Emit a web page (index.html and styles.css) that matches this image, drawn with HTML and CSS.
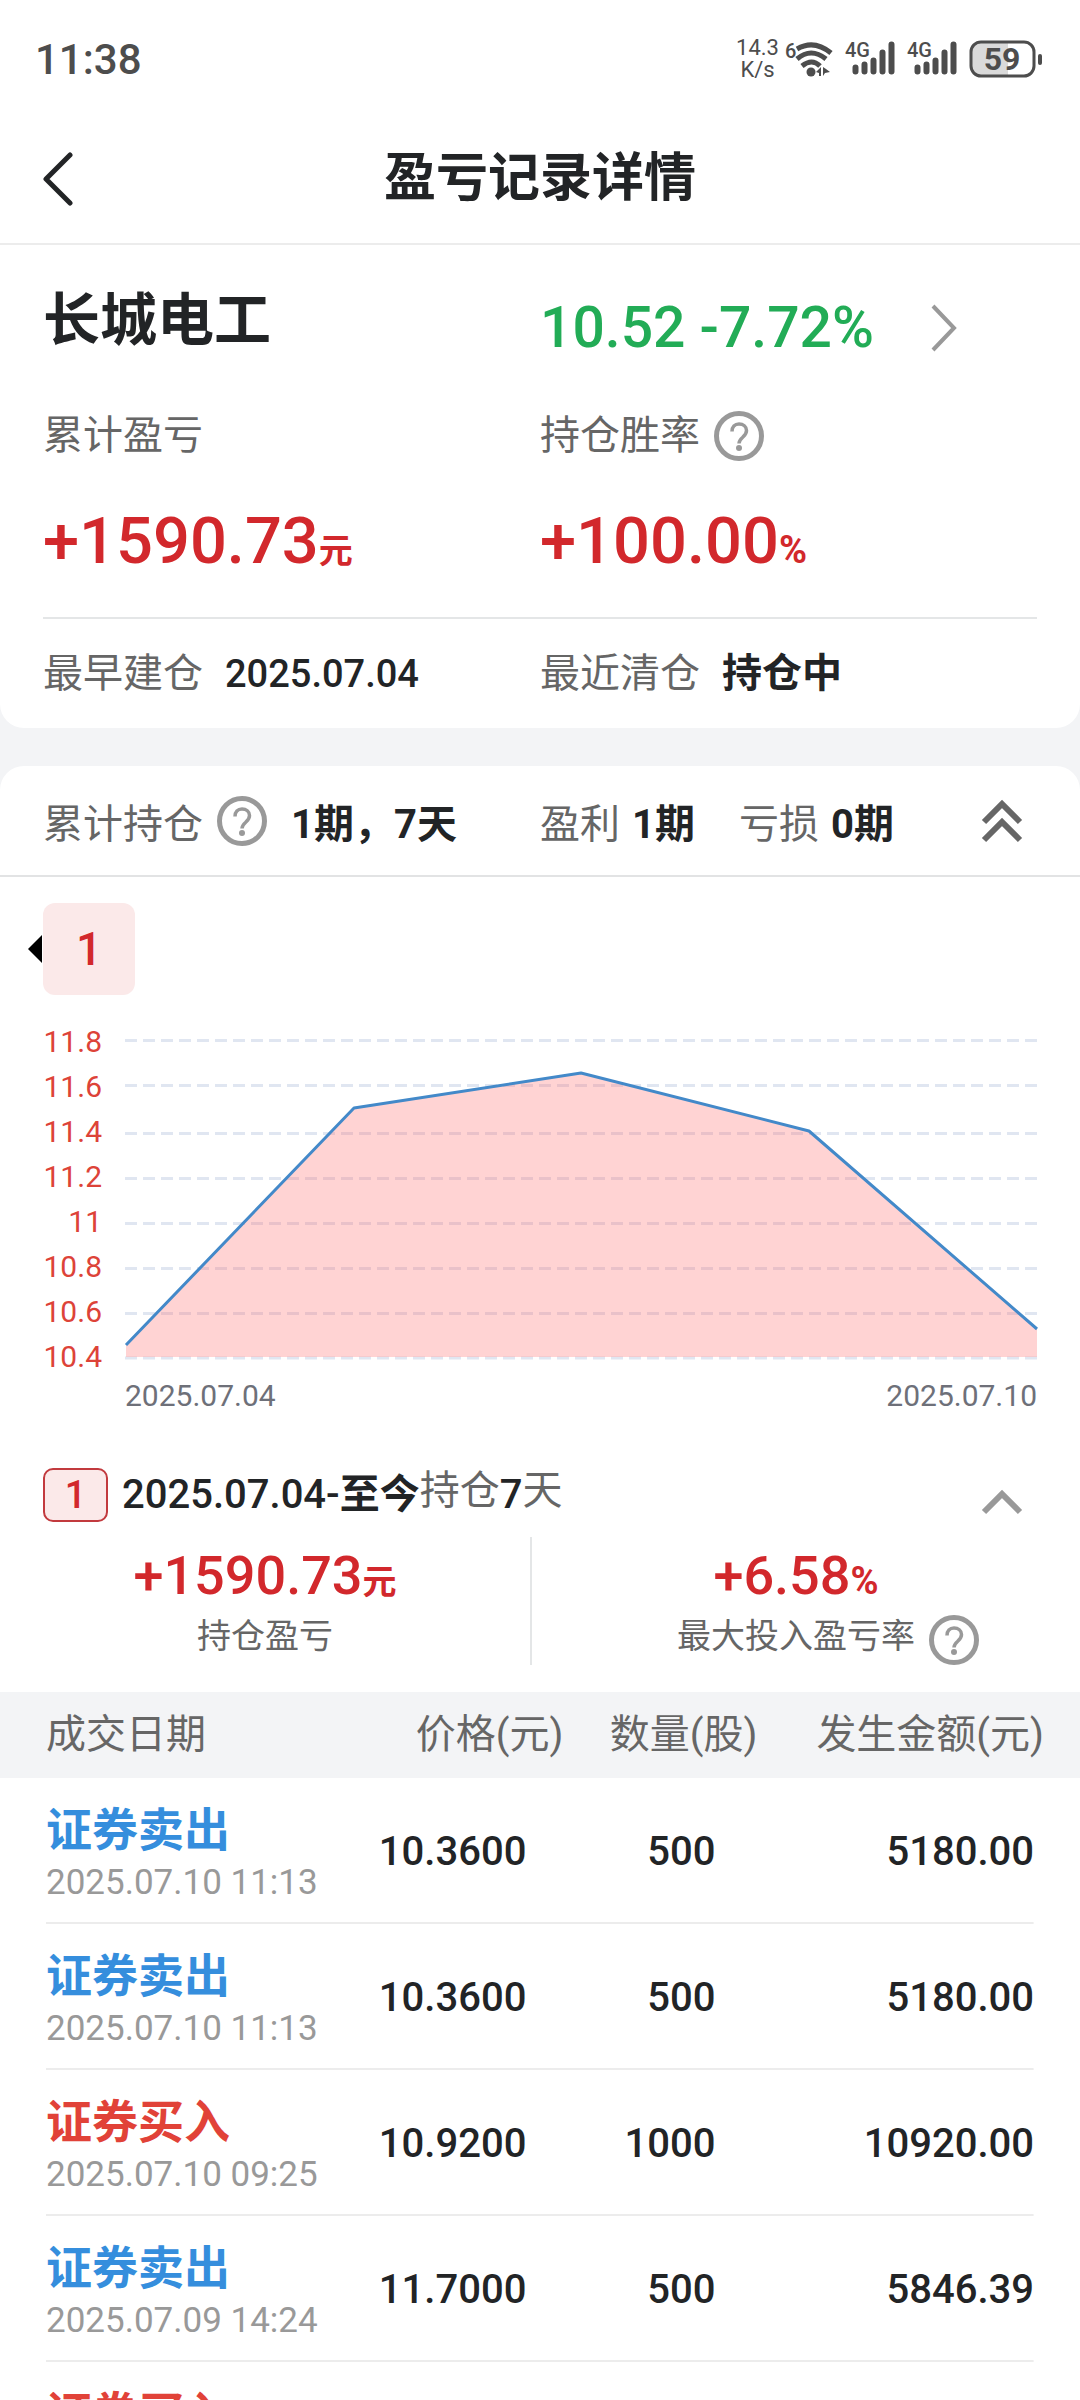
FILE: index.html
```html
<!DOCTYPE html>
<html lang="zh-CN">
<head>
    <meta charset="UTF-8">
    <meta content="width=device-width, initial-scale=1.0" name="viewport">
    <title>盈亏记录详情</title>
    <link rel="stylesheet" href="styles.css">
</head>
<body>
<!-- shared icon shapes -->
<svg class="defs" aria-hidden="true">
    <symbol id="icon-help" viewBox="0 0 50 50">
        <circle cx="25" cy="25" r="22.500" fill="none" stroke="currentColor" stroke-width="5"/>
        <path d="M18 20.500c0-4.500 2.800-7.500 7-7.500s7.500 2.500 7.500 6.500c0 3.500-2 5-4 7-2.500 2.200-3.500 3.500-3.500 6" fill="none" stroke="currentColor" stroke-width="3.500"/>
        <circle cx="25" cy="37" r="3" fill="currentColor"/>
    </symbol>
    <symbol id="icon-signal" viewBox="0 0 54 46">
        <path d="M12.500 31.500v4M21.500 28.500v7M30.500 24.500v11M39.500 16.500v19M48.500 8.500v27" fill="none" stroke="currentColor" stroke-width="6" stroke-linecap="round"/>
    </symbol>
</svg>

<div class="page">
    <div class="status-bar">
        <span class="time">11:38</span>
        <div class="status-icons">
            <div class="speed"><span>14.3</span><span>K/s</span></div>
            <svg class="wifi" width="52" height="46" viewBox="-2 -4 52 46">
                <text x="0" y="18" class="status-text">6</text>
                <g fill="none" stroke="currentColor" stroke-width="5">
                    <path d="M12 9q17-10 34 4"/>
                    <path d="M12 19q14-12 29 0"/>
                    <path d="M17 26q10-8 18 0"/>
                </g>
                <circle cx="26" cy="32" r="4.500" fill="currentColor"/>
                <path d="M31 32l5-5v9h-2v-3zM38 27v9l2-3 5-1-4-3z" fill="currentColor"/>
            </svg>
            <svg width="54" height="46" viewBox="0 0 54 46">
                <use href="#icon-signal"/>
                <text x="2" y="21" class="status-text">4G</text>
            </svg>
            <svg width="54" height="46" viewBox="0 0 54 46">
                <use href="#icon-signal"/>
                <text x="2" y="21" class="status-text">4G</text>
            </svg>
            <svg class="battery" width="74" height="38" viewBox="0 0 74 38">
                <path d="M11 2h28v34H11a9 9 0 0 1-9-9V11a9 9 0 0 1 9-9z" fill="#dadada"/>
                <rect x="2" y="2" width="63" height="34" rx="10" fill="none" stroke="currentColor" stroke-width="3"/>
                <rect x="69" y="14" width="4" height="11" rx="2" fill="currentColor"/>
                <text x="33" y="30" text-anchor="middle" class="battery-text">59</text>
            </svg>
        </div>
    </div>

    <header class="nav">
        <button class="icon-button" aria-label="返回">
            <svg width="30" height="54" viewBox="0 0 30 54"><path d="M27 3L3 27l24 24" fill="none" stroke="currentColor" stroke-width="5" stroke-linecap="round" stroke-linejoin="round"/></svg>
        </button>
        <h1>盈亏记录详情</h1>
    </header>

    <main>
        <section class="card summary">
            <div class="row stock">
                <h2>长城电工</h2>
                <a class="quote" href="#quote">
                    <span>10.52 -7.72%</span>
                    <svg width="28" height="48" viewBox="0 0 28 48"><path d="M3 2l21 22L3 46" fill="none" stroke="#999" stroke-width="4"/></svg>
                </a>
            </div>
            <div class="row labels">
                <span class="label">累计盈亏</span>
                <div class="with-help">
                    <span class="label">持仓胜率</span>
                    <button class="help" aria-label="持仓胜率说明"><svg><use href="#icon-help"/></svg></button>
                </div>
            </div>
            <div class="row totals">
                <div class="total">+1590.73<small>元</small></div>
                <div class="total">+100.00<small class="percent">%</small></div>
            </div>
            <div class="row dates">
                <div><span class="label">最早建仓</span><span class="value">2025.07.04</span></div>
                <div><span class="label">最近清仓</span><b>持仓中</b></div>
            </div>
        </section>

        <section class="card holding">
            <div class="row holding-head">
                <div class="with-help">
                    <span class="label">累计持仓</span>
                    <button class="help" aria-label="累计持仓说明"><svg><use href="#icon-help"/></svg></button>
                    <b class="periods">1期，7天</b>
                </div>
                <div class="result">
                    <div><span class="label">盈利</span><b>1期</b></div>
                    <div><span class="label">亏损</span><b>0期</b></div>
                    <button class="icon-button toggle" aria-label="全部收起">
                        <svg width="42" height="44" viewBox="0 0 42 44"><path d="M3 23L21 5l18 18M3 41l18-18 18 18" fill="none" stroke="currentColor" stroke-width="6"/></svg>
                    </button>
                </div>
            </div>

            <div class="tabs">
                <button class="tab">1</button>
            </div>

            <svg class="chart" viewBox="0 0 1080 425" role="img" aria-label="股价走势">
                <g class="grid">
                    <path d="M125 45.500H1037M125 90.500H1037M125 138.500H1037M125 183.500H1037M125 228.500H1037M125 273.500H1037M125 318.500H1037M125 363H1037"/>
                </g>
                <path class="area" d="M126 350L354 113L581 78L809 136L1037 334V362H126z"/>
                <path class="line" d="M126 350L354 113L581 78L809 136L1037 334"/>
                <g class="y-axis">
                    <text x="102" y="57">11.8</text>
                    <text x="102" y="102">11.6</text>
                    <text x="102" y="147">11.4</text>
                    <text x="102" y="192">11.2</text>
                    <text x="102" y="237">11</text>
                    <text x="102" y="282">10.8</text>
                    <text x="102" y="327">10.6</text>
                    <text x="102" y="372">10.4</text>
                </g>
                <g class="x-axis">
                    <text x="125" y="411">2025.07.04</text>
                    <text x="1037" y="411" text-anchor="end">2025.07.10</text>
                </g>
            </svg>

            <div class="period">
                <span class="badge">1</span>
                <div class="period-title">
                    <span class="value">2025.07.04-<b>至今</b></span>
                    <span class="label">持仓</span>
                    <span class="value">7</span>
                    <span class="label">天</span>
                </div>
                <button class="icon-button collapse" aria-label="收起">
                    <svg width="42" height="42" viewBox="0 0 42 42"><path d="M3 32l18-18 18 18" fill="none" stroke="currentColor" stroke-width="6"/></svg>
                </button>
            </div>

            <div class="stats">
                <div class="stat">
                    <div class="stat-value">+1590.73<small>元</small></div>
                    <div class="stat-label"><span>持仓盈亏</span></div>
                </div>
                <div class="stat">
                    <div class="stat-value">+6.58<small class="percent">%</small></div>
                    <div class="stat-label">
                        <span>最大投入盈亏率</span>
                        <button class="help" aria-label="最大投入盈亏率说明"><svg><use href="#icon-help"/></svg></button>
                    </div>
                </div>
            </div>

            <table class="trades">
                <thead>
                <tr>
                    <th class="col-date">成交日期</th>
                    <th class="col-price">价格(元)</th>
                    <th class="col-count">数量(股)</th>
                    <th>发生金额(元)</th>
                </tr>
                </thead>
                <tbody>
                <tr>
                    <td><strong class="sell">证券卖出</strong><time>2025.07.10 11:13</time></td>
                    <td>10.3600</td>
                    <td>500</td>
                    <td>5180.00</td>
                </tr>
                <tr>
                    <td><strong class="sell">证券卖出</strong><time>2025.07.10 11:13</time></td>
                    <td>10.3600</td>
                    <td>500</td>
                    <td>5180.00</td>
                </tr>
                <tr>
                    <td><strong class="buy">证券买入</strong><time>2025.07.10 09:25</time></td>
                    <td>10.9200</td>
                    <td>1000</td>
                    <td>10920.00</td>
                </tr>
                <tr>
                    <td><strong class="sell">证券卖出</strong><time>2025.07.09 14:24</time></td>
                    <td>11.7000</td>
                    <td>500</td>
                    <td>5846.39</td>
                </tr>
                <tr class="last">
                    <td><strong class="buy">证券买入</strong></td>
                    <td></td>
                    <td></td>
                    <td></td>
                </tr>
                </tbody>
            </table>
        </section>
    </main>
</div>
</body>
</html>
```
FILE: styles.css
```css
* {
    box-sizing: border-box;
}

body {
    margin: 0;
    font-family: Roboto, "Noto Sans CJK SC", sans-serif;
    font-size: 40px;
    color: #222426;
    background: #f3f4f6;
}

button {
    padding: 0;
    border: 0;
    background: none;
    font: inherit;
    color: inherit;
    cursor: pointer;
}

svg {
    display: block;
}

h1, h2 {
    margin: 0;
}

.defs {
    display: none;
}

.page {
    display: flex;
    flex-direction: column;
    height: 100vh;
}

main {
    flex: 1;
    min-height: 0;
    overflow-y: auto;
    scrollbar-width: none;
}

/* status bar */
.status-bar {
    display: flex;
    flex: none;
    justify-content: space-between;
    align-items: center;
    height: 110px;
    padding: 8px 37px 0 35px;
    background: #fff;
    color: #4d4d4d;
}

.time {
    font-size: 42px;
    font-weight: 500;
}

.status-icons {
    display: flex;
    align-items: center;
    gap: 8px;
}

.speed {
    display: grid;
    margin-right: -4px;
    font-size: 22px;
    line-height: 22px;
    text-align: center;
}

.status-text {
    font-size: 20px;
    font-weight: 500;
    fill: currentColor;
}

.battery {
    margin-left: 2px;
}

.battery-text {
    font-size: 32px;
    font-weight: 700;
    fill: currentColor;
}

/* title bar */
.nav {
    display: grid;
    flex: none;
    grid-template-columns: 1fr auto 1fr;
    align-items: center;
    height: 135px;
    padding: 4px 43px 0;
    background: #fff;
    border-bottom: 2px solid #ececec;
}

.nav h1 {
    font-size: 52px;
    font-weight: 700;
    line-height: 72px;
}

.icon-button {
    justify-self: start;
}

/* summary */
.card {
    background: #fff;
}

.row {
    display: grid;
    grid-template-columns: 1fr 1fr;
    align-items: center;
}

.label {
    color: #666;
}

.value {
    font-size: 38px;
    font-weight: 500;
}

.summary {
    padding: 38px 43px 0;
    border-radius: 0 0 24px 24px;
}

.stock {
    height: 83px;
}

.stock h2 {
    align-self: start;
    font-size: 57px;
    line-height: 76px;
}

.quote {
    display: flex;
    align-self: end;
    align-items: center;
    gap: 56px;
    font-size: 57px;
    font-weight: 500;
    line-height: 76px;
    color: #22ac56;
    text-decoration: none;
}

.labels {
    margin-top: 40px;
    line-height: 60px;
}

.with-help {
    display: flex;
    align-items: center;
    gap: 14px;
}

.help {
    flex: none;
    color: #999;
}

.help svg {
    width: 50px;
    height: 50px;
}

.totals {
    margin: 37px 0 38px;
}

.total, .stat-value {
    font-size: 65px;
    font-weight: 500;
    line-height: 76px;
    color: #d2282c;
}

.total small, .stat-value small {
    font-size: 34px;
    font-weight: 700;
    line-height: 1;
}

.total .percent, .stat-value .percent {
    font-size: 38px;
}

.dates {
    height: 111px;
    border-top: 2px solid #e4e6e7;
    line-height: 58px;
}

.dates .label {
    margin-right: 22px;
}

/* holding */
.holding {
    margin-top: 38px;
    border-radius: 24px 24px 0 0;
}

.holding-head {
    height: 111px;
    padding: 0 43px;
    border-bottom: 2px solid #e2e3e4;
}

.periods {
    margin-left: 10px;
}

.result {
    display: flex;
    align-items: center;
    gap: 44px;
}

.result .label {
    margin-right: 12px;
}

.toggle {
    margin: 0 14px 0 auto;
    color: #666;
}

.tabs {
    display: flex;
    align-items: center;
    padding: 26px 28px 0;
}

.tabs::before {
    content: "";
    border: 14px solid transparent;
    border-left-width: 0;
    border-right-color: #000;
    margin-right: 1px;
}

.tab {
    width: 92px;
    height: 92px;
    border-radius: 12px;
    background: #fbe9e9;
    color: #d2282c;
    font-size: 46px;
    font-weight: 500;
}

.chart {
    width: 100%;
}

.grid path {
    fill: none;
    stroke: #e0e6f1;
    stroke-width: 3;
    stroke-dasharray: 12 6;
}

.area {
    fill: #ff6e6e;
    fill-opacity: 0.3;
}

.line {
    fill: none;
    stroke: #4389c9;
    stroke-width: 3;
    stroke-linejoin: bevel;
}

.y-axis {
    font-size: 30px;
    fill: #dd4338;
    text-anchor: end;
}

.x-axis {
    font-size: 30px;
    fill: #6e7079;
}

/* one period */
.period {
    display: flex;
    align-items: center;
    height: 54px;
    margin-top: 48px;
    padding: 0 57px 0 43px;
}

.badge {
    width: 65px;
    height: 54px;
    margin-right: 14px;
    border: 2px solid #c23a3e;
    border-radius: 10px;
    background: #fbe9e9;
    color: #d2282c;
    font-size: 38px;
    font-weight: 500;
    line-height: 50px;
    text-align: center;
}

.period-title {
    display: flex;
    align-items: center;
    height: 54px;
    line-height: 54px;
}

.period-title .value {
    font-size: 40px;
}

.period-title .label {
    align-self: flex-start;
    line-height: 46px;
}

.collapse {
    margin-left: auto;
    align-self: flex-end;
    color: #999;
}

.stats {
    display: grid;
    grid-template-columns: 1fr 1fr;
    margin: 15px 20px 27px 0;
}

.stat + .stat {
    border-left: 2px solid #e4e6e7;
}

.stat-value {
    font-size: 54px;
    line-height: 78px;
    text-align: center;
}

.stat-label {
    display: grid;
    grid-template-columns: 1fr auto 1fr;
    column-gap: 14px;
    font-size: 34px;
    line-height: 42px;
    color: #666;
}

.stat-label span {
    grid-column: 2;
}

.stat-label .help {
    justify-self: start;
}

/* trades */
.trades {
    width: 100%;
    table-layout: fixed;
    border-collapse: collapse;
    text-align: right;
}

.trades th {
    height: 86px;
    padding: 0 9px 0 0;
    background: #f3f4f6;
    color: #666;
    font-weight: 400;
    line-height: 60px;
}

.trades th:last-child {
    padding-right: 36px;
}

.trades .col-date {
    width: 32%;
}

.trades .col-price {
    width: 21%;
}

.trades .col-count {
    width: 17.5%;
    padding-right: 4px;
}

.trades tbody tr {
    background: linear-gradient(#ececec, #ececec) no-repeat center bottom / calc(100% - 92px) 2px;
}

.trades td {
    height: 146px;
    padding: 20px 46px 20px 0;
    font-weight: 500;
}

.trades th:first-child {
    padding: 0 0 0 46px;
    text-align: left;
}

.trades td:first-child {
    padding: 24px 0 16px 46px;
    text-align: left;
}

.trades .last td {
    vertical-align: top;
}

.trades strong, .trades time {
    display: block;
    white-space: nowrap;
}

.trades strong {
    font-size: 46px;
    line-height: 56px;
}

.trades time {
    font-size: 35px;
    font-weight: 400;
    line-height: 50px;
    color: #999;
}

.sell {
    color: #358edd;
}

.buy {
    color: #e14238;
}
```
